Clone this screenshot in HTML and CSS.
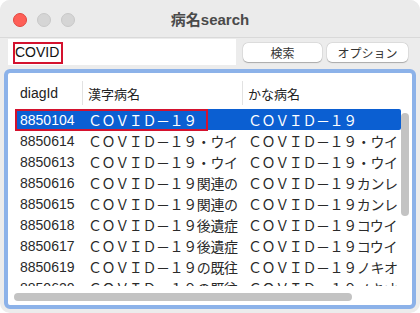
FILE: index.html
```html
<!DOCTYPE html>
<html lang="ja">
<head>
<meta charset="utf-8">
<title>病名search</title>
<link rel="stylesheet" href="styles.css">
</head>
<body>
<div class="window">
  <div class="titlebar">
    <div class="lights">
      <span class="light red"></span>
      <span class="light grey"></span>
      <span class="light grey"></span>
    </div>
    <div class="title">病名search</div>
  </div>
  <div class="toolbar">
    <div class="field"><span class="field-text">COVID</span><span class="mark mark-field"></span></div>
    <button class="btn btn-search">検索</button>
    <button class="btn btn-opt">オプション</button>
  </div>
  <div class="table-wrap">
    <div class="header">
      <div class="hcell c1">diagId</div>
      <div class="hcell c2 sep">漢字病名</div>
      <div class="hcell c3 sep">かな病名</div>
    </div>
    <div class="rows">
      <div class="row selected"><div class="cell c1">8850104</div><div class="cell c2">ＣＯＶＩＤ－１９</div><div class="cell c3">ＣＯＶＩＤ－１９</div></div>
      <div class="row"><div class="cell c1">8850614</div><div class="cell c2">ＣＯＶＩＤ－１９・ウイルス</div><div class="cell c3">ＣＯＶＩＤ－１９・ウイルス</div></div>
      <div class="row"><div class="cell c1">8850613</div><div class="cell c2">ＣＯＶＩＤ－１９・ウイルス</div><div class="cell c3">ＣＯＶＩＤ－１９・ウイルス</div></div>
      <div class="row"><div class="cell c1">8850616</div><div class="cell c2">ＣＯＶＩＤ－１９関連の</div><div class="cell c3">ＣＯＶＩＤ－１９カンレン</div></div>
      <div class="row"><div class="cell c1">8850615</div><div class="cell c2">ＣＯＶＩＤ－１９関連の</div><div class="cell c3">ＣＯＶＩＤ－１９カンレン</div></div>
      <div class="row"><div class="cell c1">8850618</div><div class="cell c2">ＣＯＶＩＤ－１９後遺症</div><div class="cell c3">ＣＯＶＩＤ－１９コウイ</div></div>
      <div class="row"><div class="cell c1">8850617</div><div class="cell c2">ＣＯＶＩＤ－１９後遺症</div><div class="cell c3">ＣＯＶＩＤ－１９コウイ</div></div>
      <div class="row"><div class="cell c1">8850619</div><div class="cell c2">ＣＯＶＩＤ－１９の既往</div><div class="cell c3">ＣＯＶＩＤ－１９ノキオウ</div></div>
      <div class="row"><div class="cell c1">8850620</div><div class="cell c2">ＣＯＶＩＤ－１９の既往</div><div class="cell c3">ＣＯＶＩＤ－１９ノキオウ</div></div>
    </div>
    <div class="hscroll"><div class="hthumb"></div></div>
    <div class="vthumb"></div>
    <div class="mark mark-row"></div>
  </div>
</div>
</body>
</html>
```

FILE: styles.css
```css
* { box-sizing: border-box; }
html, body { margin: 0; padding: 0; background: #ffffff; }
body { font-family: "Liberation Sans", "Noto Sans CJK JP", sans-serif; color: #222; }

.window {
  width: 420px;
  height: 313px;
  background: #ececec;
  border-radius: 10px;
  overflow: hidden;
  display: flex;
  flex-direction: column;
}

.titlebar {
  height: 38px;
  position: relative;
  display: flex;
  align-items: center;
  justify-content: center;
  background: #ebebeb;
  border-bottom: 1px solid #d9d9d9;
  flex: none;
}
.lights {
  position: absolute;
  left: 13px;
  top: 13px;
  display: flex;
  gap: 10px;
}
.light { width: 14px; height: 14px; border-radius: 50%; display: block; }
.light.red { background: #fe5f57; border: 0.5px solid #e2463f; }
.light.grey { background: #d5d5d5; border: 0.5px solid #c8c8c8; }
.title {
  font-family: "Liberation Sans", "Noto Sans CJK JP", sans-serif;
  font-weight: bold;
  font-size: 15px;
  color: #4a4a4a;
  margin-top: -1px;
}

.toolbar {
  height: 31px;
  flex: none;
  display: flex;
  align-items: flex-start;
  padding: 1px 0 0 8px;
}
.field {
  position: relative;
  width: 228px;
  height: 26px;
  background: #fff;
  display: flex;
  align-items: center;
  padding-left: 7px;
  font-size: 14px;
  color: #111;
}
.btn {
  margin-top: 4px;
  height: 19px;
  padding: 0;
  border: none;
  border-radius: 5px;
  background: #fff;
  box-shadow: 0 0.5px 1px rgba(0,0,0,0.25), 0 0 0 0.5px rgba(0,0,0,0.08);
  font-family: "Noto Sans CJK JP", sans-serif;
  font-size: 12px;
  color: #333;
  line-height: 19px;
}
.btn-search { width: 79px; margin-left: 7px; }
.btn-opt { width: 81px; margin-left: 5px; }

.mark {
  position: absolute;
  border: 2px solid #d4122e;
  pointer-events: none;
}
.mark-field { left: 5px; top: 3px; width: 50px; height: 22px; }

.table-wrap {
  position: relative;
  margin: 0 4px;
  height: 240px;
  border: 4px solid #8cb2e9;
  border-radius: 6px;
  background: #fff;
  display: flex;
  flex-direction: column;
  overflow: hidden;
}

.header {
  display: flex;
  height: 24px;
  margin-top: 8px;
  flex: none;
  font-size: 14px;
}
.hcell {
  display: flex;
  align-items: center;
  white-space: nowrap;
}
.hcell.c2, .hcell.c3 { font-family: "Noto Sans CJK JP", sans-serif; font-size: 13px; }
.sep { border-left: 1px solid #e2e2e2; padding-left: 5px; }
.hcell.c1 { padding-left: 12px; width: 74px; }
.hcell.c2 { width: 160px; }
.hcell.c3 { flex: 1; }

.rows {
  margin-top: 4px;
  height: 177px;
  overflow: hidden;
  flex: none;
}
.row {
  display: flex;
  height: 21px;
  align-items: center;
  margin-left: 8px;
  width: 385px;
  font-size: 14px;
  white-space: nowrap;
  color: #2a2a2a;
}
.row.selected { background: #0b5fd2; color: #fff; border-radius: 2px; }
.cell { overflow: hidden; flex: none; }
.cell.c1 { width: 72px; padding-left: 4px; }
.cell.c2, .cell.c3 { font-family: "Noto Sans CJK JP", sans-serif; font-size: 14px; letter-spacing: -0.4px; }
.cell.c2 { width: 150px; margin-right: 10px; }
.cell.c3 { width: 150px; }

.hscroll {
  flex: 1;
  padding: 7px 0 0 6px;
}
.hthumb {
  width: 338px;
  height: 8px;
  border-radius: 4px;
  background: #c3c3c3;
}
.vthumb {
  position: absolute;
  right: 3px;
  top: 40px;
  width: 8px;
  height: 103px;
  border-radius: 4px;
  background: #c3c3c3;
}
.mark-row { left: 7px; top: 36px; width: 193px; height: 22px; }
```
